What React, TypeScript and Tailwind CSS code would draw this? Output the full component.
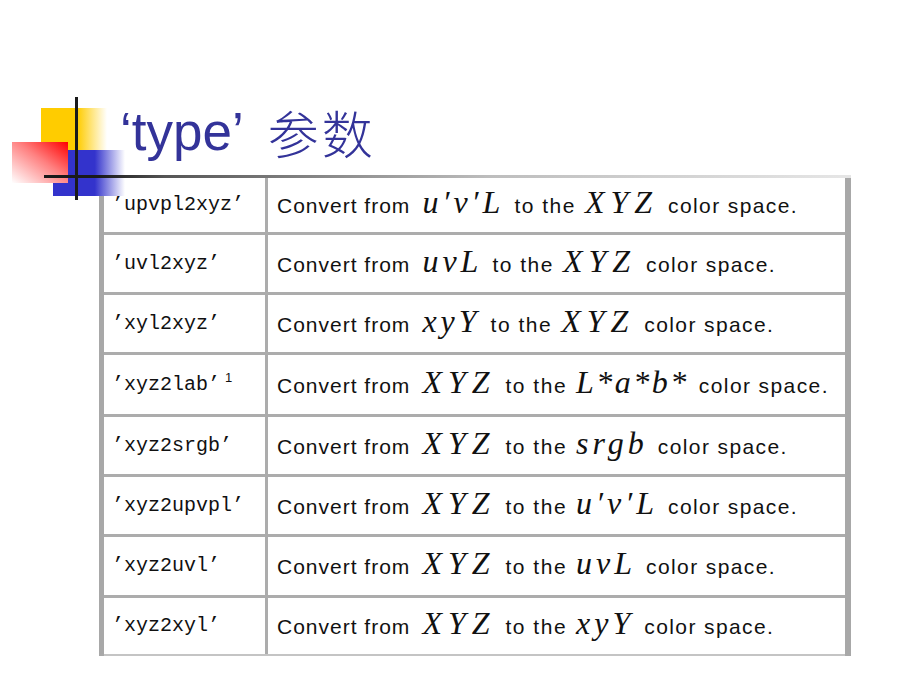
import React from "react";

const sans = "font-['Liberation_Sans',Arial,sans-serif]";
const mono = "font-['Liberation_Mono','Courier_New',monospace]";

type Row = { code: string; sup?: boolean; from: string; to: string; h: string };

const rows: Row[] = [
  { code: "’upvpl2xyz’", from: "u′v′L", to: "XYZ", h: "h-[57px]" },
  { code: "’uvl2xyz’", from: "uvL", to: "XYZ", h: "h-[60px]" },
  { code: "’xyl2xyz’", from: "xyY", to: "XYZ", h: "h-[60px]" },
  { code: "’xyz2lab’", sup: true, from: "XYZ", to: "L*a*b*", h: "h-[62px]" },
  { code: "’xyz2srgb’", from: "XYZ", to: "srgb", h: "h-[60px]" },
  { code: "’xyz2upvpl’", from: "XYZ", to: "u′v′L", h: "h-[60px]" },
  { code: "’xyz2uvl’", from: "XYZ", to: "uvL", h: "h-[61px]" },
  { code: "’xyz2xyl’", from: "XYZ", to: "xyY", h: "h-[58px]" },
];

function MathText({ t }: { t: string }) {
  const track =
    t === "XYZ"
      ? "tracking-[6px]"
      : t === "L*a*b*"
      ? "tracking-[2.5px]"
      : t === "u′v′L"
      ? "tracking-[4px]"
      : t === "srgb"
      ? "tracking-[4px]"
      : "tracking-[4px]";
  return (
    <span className={`font-['Liberation_Serif'] italic text-[32px] ${track} text-[#111]`}>{t}</span>
  );
}

export default function App() {
  return (
    <div className="relative w-[900px] h-[675px] bg-white overflow-hidden">
      {/* decorative logo squares */}
      <div className="absolute left-[41px] top-[108px] w-[66px] h-[42px] bg-[linear-gradient(to_right,#ffcc00_0%,#ffcc00_55%,#ffffff_100%)]" />
      <div className="absolute left-[53px] top-[150px] w-[72px] h-[46px] bg-[linear-gradient(to_right,#3333cc_0%,#3333cc_58%,#ffffff_100%)]" />
      <div className="absolute left-[12px] top-[142px] w-[56px] h-[41px] bg-[linear-gradient(to_bottom_left,#ff0000_0%,#ff8080_45%,#ffffff_100%)]" />
      <div className="absolute left-[75px] top-[97px] w-[3px] h-[103px] bg-[#1a1a1a] z-10" />

      {/* title */}
      <div className="h-[175px] pt-[103px] pl-[120px] flex items-baseline leading-none whitespace-nowrap text-[#333399]">
        <span className={`${sans} text-[53px]`}>‘type’</span>
        <span className="ml-[24px] relative top-[4px] font-['Noto_Sans_CJK_SC',sans-serif] font-light text-[51px] tracking-[3px]">参数</span>
      </div>

      {/* gradient rule */}
      <div className="relative z-10 ml-[44px] w-[807px] h-[3px] bg-[linear-gradient(to_right,#1a1a1a_0%,#1a1a1a_7%,#555555_15%,#bdbdbd_55%,#e6e6e6_100%)]" />

      {/* table */}
      <div className="ml-[99px] w-[752px] flex flex-col border-l-[5px] border-r-[6px] border-[#a8a8a8]">
        {rows.map((r, i) => (
          <div
            key={i}
            className={`flex ${r.h} ${i === rows.length - 1 ? "border-b-2 border-[#c4c4c4]" : "border-b-[3px] border-[#acacac]"}`}
          >
            <div className={`w-[164px] shrink-0 border-r-[3px] border-[#acacac] flex items-center pl-[8px] ${mono} text-[20px] text-[#111]`}>
              <span>{r.code}</span>
              {r.sup && <span className={`${sans} text-[13px] relative -top-[7px] ml-[5px]`}>1</span>}
            </div>
            <div className={`flex-1 flex items-center pl-[9px] pb-[6px] ${sans} text-[21px] text-[#111]`}>
              <div className="flex items-baseline">
                <span className="tracking-[1px]">Convert from</span>
                <span className="ml-[12px]"><MathText t={r.from} /></span>
                <span className="ml-[10px] tracking-[1.5px]">to the</span>
                <span className="ml-[9px]"><MathText t={r.to} /></span>
                <span className="ml-[10px] tracking-[1.4px]">color space.</span>
              </div>
            </div>
          </div>
        ))}
      </div>
    </div>
  );
}
